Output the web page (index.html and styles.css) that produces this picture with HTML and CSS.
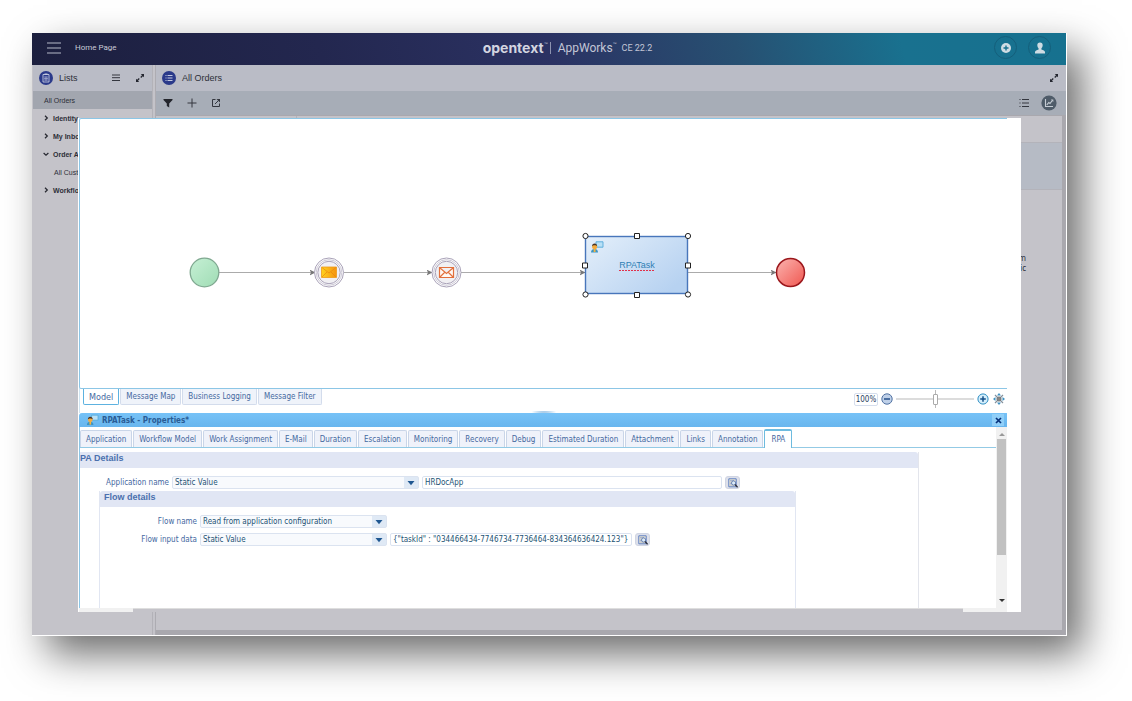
FILE: index.html
```html
<!DOCTYPE html>
<html lang="en">
<head>
<meta charset="utf-8">
<title>AppWorks - All Orders</title>
<link rel="stylesheet" href="styles.css">
</head>
<body>
<svg class="defs" width="0" height="0" aria-hidden="true">
  <symbol id="expand" viewBox="0 0 10 10"><path d="M5.800 1H9v3.200L7.900 3.200 6.200 4.900 5.300 4 7 2.200zM4.200 9H1V5.800l1.100 1L3.800 5.100l.9.9L3 7.800z" fill="#24262f"/></symbol>
  <symbol id="right" viewBox="0 0 6 6"><path d="M2 .8L4.300 3 2 5.200" fill="none" stroke="#26272f" stroke-width="1.200"/></symbol>
  <symbol id="down" viewBox="0 0 6 6"><path d="M.6 2L3 4.200 5.400 2" fill="none" stroke="#26272f" stroke-width="1.200"/></symbol>
  <symbol id="arrow" viewBox="0 0 8 6"><path d="M.5 1h7L4 5.200z" fill="#1f5791"/></symbol>
  <symbol id="user" viewBox="0 0 14 12">
    <path d="M6 .8h7v5.400H6z" fill="#b9e0f6" stroke="#55a9d9" stroke-width=".9"/>
    <path d="M1 11.500c0-2.500 1.500-3.500 3.500-3.500S8 9 8 11.500z" fill="#3c95c4"/>
    <path d="M3.700 7.600h1.800v3.400H3.700z" fill="#f7b23c"/>
    <circle cx="4.600" cy="5.700" r="2.500" fill="#f5ab3f"/>
    <path d="M2 5.400C2 3.400 3.200 2.500 4.600 2.500s2.700 1 2.600 2.900C6.500 4.400 5.800 4.300 4.600 4.300S2.700 4.500 2 5.400z" fill="#4a3222"/>
  </symbol>
  <symbol id="browse" viewBox="0 0 10 10">
    <path d="M.8.8h7.400v8H.8z" fill="#f3ead2" stroke="#5d7fc4"/>
    <path d="M2 2.500h4M2 4h2M2 5.500h2M2 7h4" stroke="#7892cb" stroke-width=".6"/>
    <circle cx="5.600" cy="5" r="2.100" fill="#dcebf8" stroke="#516fa8" stroke-width=".8"/>
    <path d="M7 6.500l2.600 2.800" stroke="#2c3040" stroke-width="1.500"/>
  </symbol>
</svg>

<div class="app">
  <header class="topbar">
    <div class="topbar-side">
      <button class="plain" aria-label="Menu"><svg width="14" height="12" viewBox="0 0 14 12"><path d="M0 1h14M0 6h14M0 11h14" stroke="#b6b9c8" stroke-width="1.200"/></svg></button>
      <a class="home" href="#">Home Page</a>
    </div>
    <div class="brand"><span class="brand-name">opentext</span><span class="tm">™</span><span class="bar"></span><span class="product">AppWorks</span><span class="tm">™</span><span class="version">CE 22.2</span></div>
    <div class="topbar-side topbar-end">
      <button class="round" aria-label="Add"><svg width="12" height="12" viewBox="0 0 12 12"><circle cx="6" cy="6" r="5" fill="#cfdce3"/><path d="M6 3.500v5M3.500 6h5" stroke="#17708f" stroke-width="1.400"/></svg></button>
      <button class="round" aria-label="Account"><svg width="12" height="12" viewBox="0 0 12 12"><path d="M6 .4c1.800 0 2.800 1.200 2.700 2.900C8.600 4.900 8 5.800 7.400 6.400v1c1.800.7 3.600 1 3.600 2.700V11.600H1v-1.500c0-1.700 1.800-2 3.600-2.700v-1C4 5.800 3.400 4.900 3.300 3.300 3.200 1.600 4.200.4 6 .4z" fill="#cfdce3"/></svg></button>
    </div>
  </header>

  <div class="main">
    <aside class="sidebar">
      <div class="panel-head">
        <svg width="14" height="14" viewBox="0 0 14 14"><circle cx="7" cy="7" r="7" fill="#2b3a8a"/><path d="M4 3.500h6v7.500H4z" fill="none" stroke="#c3c8df" stroke-width=".9"/><path d="M5.500 2.500h3v1.500h-3z" fill="#c3c8df"/><path d="M5 6h4M5 7.500h4M5 9h4M7 5.500v4.500" stroke="#c3c8df" stroke-width=".6"/></svg>
        <h2>Lists</h2>
        <button class="plain push" aria-label="List options"><svg width="8" height="8" viewBox="0 0 8 8"><path d="M0 1h8M0 3.700h8M0 6.500h8" stroke="#34363f"/></svg></button>
        <button class="plain expand" aria-label="Expand lists"><svg width="10" height="10"><use href="#expand"/></svg></button>
      </div>
      <nav class="tree">
        <a class="current" href="#">All Orders</a>
        <a href="#"><svg width="6" height="6"><use href="#right"/></svg>Identity</a>
        <a href="#"><svg width="6" height="6"><use href="#right"/></svg>My Inbox</a>
        <a href="#"><svg width="6" height="6"><use href="#down"/></svg>Order App</a>
        <a class="child" href="#">All Customers</a>
        <a href="#"><svg width="6" height="6"><use href="#right"/></svg>Workflow</a>
      </nav>
    </aside>

    <section class="orders">
      <div class="panel-head">
        <svg width="14" height="14" viewBox="0 0 14 14"><circle cx="7" cy="7" r="7" fill="#2b3a8a"/><path d="M5.500 4.500h5M5.500 7h5M5.500 9.500h5M3.500 4.500h1M3.500 7h1M3.500 9.500h1" stroke="#c3c8df"/></svg>
        <h2>All Orders</h2>
        <button class="plain push" aria-label="Expand orders"><svg width="10" height="10"><use href="#expand"/></svg></button>
      </div>
      <div class="toolbar">
        <button class="plain" aria-label="Filter"><svg width="10" height="10" viewBox="0 0 10 10"><path d="M.5 1h9v1L6.200 5.500V9.500L3.800 8V5.500L.5 2z" fill="#23252c"/></svg></button>
        <button class="plain" aria-label="New"><svg width="10" height="10" viewBox="0 0 10 10"><path d="M5 .5v9M.5 5h9" stroke="#34373f"/></svg></button>
        <button class="plain" aria-label="Open"><svg width="10" height="10" viewBox="0 0 10 10"><path d="M4.500 1.500H1.500v7h7v-3" fill="none" stroke="#34373f"/><path d="M4 6l3.500-3.500" stroke="#34373f"/><path d="M5.500 1H9v3.500z" fill="#34373f"/></svg></button>
        <button class="plain push" aria-label="List view"><svg width="10" height="10" viewBox="0 0 10 10"><path d="M3 1.500h7M3 5h7M3 8.500h7M.5 1.500h1M.5 5h1M.5 8.500h1" stroke="#34373f"/></svg></button>
        <button class="plain" aria-label="Chart view"><svg width="16" height="16" viewBox="0 0 16 16"><circle cx="8" cy="8" r="7.600" fill="#4f5c69"/><path d="M4.500 4v7.500h7.500" fill="none" stroke="#c5ccd4" stroke-width="1.100"/><path d="M5.800 9.800L7.800 7.500l1.200 1 2.200-2.800" fill="none" stroke="#c5ccd4" stroke-width="1.100"/><path d="M9.800 4.500H12.300V7z" fill="#c5ccd4"/></svg></button>
      </div>
      <div class="grid-body">
        <div class="grid-head"><span></span><span></span></div>
        <div class="grid-row"></div>
        <div class="grid-note">m<br>ic</div>
      </div>
    </section>
  </div>

  <div class="dialog">
    <div class="canvas">
      <svg class="diagram" width="928" height="268" viewBox="0 0 928 268">
        <defs>
          <linearGradient id="g" x1="0" y1="0" x2="1" y2="1"><stop offset="0" stop-color="#c6f0d5"/><stop offset="1" stop-color="#9fdcb4"/></linearGradient>
          <linearGradient id="r" x1="0" y1="0" x2="1" y2="1"><stop offset="0" stop-color="#fbb4b0"/><stop offset="1" stop-color="#f05750"/></linearGradient>
          <linearGradient id="b" x1="0" y1="0" x2="1" y2=".7"><stop offset="0" stop-color="#e4effa"/><stop offset="1" stop-color="#b7d2f1"/></linearGradient>
          <linearGradient id="o" x1="0" y1="0" x2="1" y2="0"><stop offset="0" stop-color="#ffd21e"/><stop offset="1" stop-color="#f5930f"/></linearGradient>
          <marker id="tip" markerUnits="userSpaceOnUse" markerWidth="6" markerHeight="6" refX="5.500" refY="3" orient="auto"><path d="M0 0l6 3-6 3 1.500-3z" fill="#777"/></marker>
        </defs>
        <g stroke="#ababab" stroke-width="1.200">
          <path d="M139 153.500H235" marker-end="url(#tip)"/><path d="M264 153.500H352" marker-end="url(#tip)"/>
          <path d="M381 153.500H505" marker-end="url(#tip)"/><path d="M608 153.500H696" marker-end="url(#tip)"/>
        </g>
        <circle cx="124.500" cy="153.500" r="14.300" fill="url(#g)" stroke="#7fa890" stroke-width="1.300"/>
        <g fill="#fff" stroke="#a9a2b8"><circle cx="249" cy="153.500" r="14.500"/><circle cx="249" cy="153.500" r="12.800" stroke-width=".6"/><circle cx="249" cy="153.500" r="11.200" fill="#f1f0f3"/>
        <circle cx="366.500" cy="153.500" r="14.500"/><circle cx="366.500" cy="153.500" r="12.800" stroke-width=".6"/><circle cx="366.500" cy="153.500" r="11.200" fill="#f1f0f3"/></g>
        <path d="M241.500 148h15v10.500h-15z" fill="url(#o)" stroke="#ee9a16" stroke-width=".8"/><path d="M242 148.500l7 5.500 7-5.500M242 158l5-5M256 158l-5-5" fill="none" stroke="#e98510" stroke-width=".7"/>
        <path d="M359.500 148.500h14v10h-14zM360 149l6.500 5.500 6.500-5.500M360 158l5-5M373 158l-5-5" fill="#fff8f3" stroke="#e2703c" stroke-width="1.200"/>
        <rect x="505.500" y="117.500" width="102" height="57" fill="url(#b)" stroke="#4876bb" stroke-width="1.400"/>
        <use href="#user" x="510" y="121" width="14" height="14"/>
        <text class="task-name" x="557" y="149" text-anchor="middle">RPATask</text>
        <path d="M539 151.500h36" stroke="#e0304b" stroke-width="1" stroke-dasharray="2 1"/>
        <g fill="#fff" stroke="#222">
          <circle cx="505.500" cy="117" r="2.600"/><circle cx="608" cy="117" r="2.600"/><circle cx="505.500" cy="175.500" r="2.600"/><circle cx="608" cy="175.500" r="2.600"/>
          <path d="M554.500 114.500h5v5h-5zM554.500 173.500h5v5h-5zM502.500 144h5v5h-5zM605.500 144h5v5h-5z"/>
        </g>
        <circle cx="710.500" cy="153.500" r="14" fill="url(#r)" stroke="#9b171c" stroke-width="1.500"/>
      </svg>
    </div>

    <div class="view-bar">
      <div class="view-tabs" role="tablist">
        <button role="tab" class="selected" aria-selected="true">Model</button>
        <button role="tab">Message Map</button>
        <button role="tab">Business Logging</button>
        <button role="tab">Message Filter</button>
      </div>
      <i class="grip"></i>
      <div class="zoom">
        <input class="zoom-value" aria-label="Zoom level" value="100%">
        <button class="plain" aria-label="Zoom out"><svg width="12" height="12" viewBox="0 0 12 12"><circle cx="6" cy="6" r="5.200" fill="#bfd0e8" stroke="#5273a3"/><path d="M3 6h6" stroke="#254f8a" stroke-width="1.500"/></svg></button>
        <input class="slider" type="range" aria-label="Zoom" min="0" max="100" value="50">
        <button class="plain" aria-label="Zoom in"><svg width="12" height="12" viewBox="0 0 12 12"><circle cx="6" cy="6" r="5.100" fill="#d5eefb" stroke="#2f8fc4"/><path d="M3.200 6h5.600M6 3.200v5.600" stroke="#14508a" stroke-width="1.500"/></svg></button>
        <button class="plain fit" aria-label="Fit to window"><svg width="12" height="12" viewBox="0 0 12 12"><path d="M6 0l2 2.500H4zM6 12l2-2.500H4zM0 6l2.500-2v4zM12 6L9.500 4v4z" fill="#3c8fc0"/><path d="M2 2l8 8M10 2l-8 8" stroke="#84909c" stroke-width="1.200"/><circle cx="6" cy="6" r="2.100" fill="#8a8580" stroke="#73787c"/></svg></button>
      </div>
    </div>

    <section class="props">
      <div class="props-title">
        <svg width="13" height="12"><use href="#user"/></svg>
        <h3>RPATask - Properties*</h3>
        <button aria-label="Close"><svg width="7" height="7" viewBox="0 0 7 7"><path d="M1 1l5 5M6 1L1 6" stroke="#06307a" stroke-width="1.700"/></svg></button>
      </div>
      <div class="props-body">
        <div class="pane">
          <div class="tabs" role="tablist">
            <button role="tab">Application</button>
            <button role="tab">Workflow Model</button>
            <button role="tab">Work Assignment</button>
            <button role="tab">E-Mail</button>
            <button role="tab">Duration</button>
            <button role="tab">Escalation</button>
            <button role="tab">Monitoring</button>
            <button role="tab">Recovery</button>
            <button role="tab">Debug</button>
            <button role="tab">Estimated Duration</button>
            <button role="tab">Attachment</button>
            <button role="tab">Links</button>
            <button role="tab">Annotation</button>
            <button role="tab" class="selected" aria-selected="true">RPA</button>
          </div>
          <div class="group outer">
            <h4>PA Details</h4>
            <div class="row">
              <label for="app-type">Application name</label>
              <span class="pick wide"><select id="app-type"><option>Static Value</option></select><svg width="8" height="6"><use href="#arrow"/></svg></span>
              <input class="app-value" aria-label="Application value" value="HRDocApp">
              <button class="browse" aria-label="Browse applications"><svg width="10" height="10"><use href="#browse"/></svg></button>
            </div>
            <div class="group inner">
              <h4>Flow details</h4>
              <div class="row">
                <label for="flow-name">Flow name</label>
                <span class="pick"><select id="flow-name"><option>Read from application configuration</option></select><svg width="8" height="6"><use href="#arrow"/></svg></span>
              </div>
              <div class="row">
                <label for="flow-data">Flow input data</label>
                <span class="pick"><select id="flow-data"><option>Static Value</option></select><svg width="8" height="6"><use href="#arrow"/></svg></span>
                <input class="flow-value" aria-label="Flow input value" value='{"taskId" : "034466434-7746734-7736464-834364636424.123"}'>
                <button class="browse" aria-label="Browse flow data"><svg width="10" height="10"><use href="#browse"/></svg></button>
              </div>
            </div>
          </div>
        </div>
        <div class="vscroll">
          <svg width="6" height="4" viewBox="0 0 6 4"><path d="M0 4l3-3 3 3z" fill="#999"/></svg>
          <i></i>
          <svg width="6" height="4" viewBox="0 0 6 4"><path d="M0 0l3 3 3-3z" fill="#333"/></svg>
        </div>
      </div>
      <div class="hscroll"><i></i></div>
    </section>
  </div>
</div>
</body>
</html>
```
FILE: styles.css
```css
* { box-sizing: border-box; }

body {
  margin: 0;
  min-height: 100vh;
  padding: 33px 65px 65px 32px;
  display: flex;
  background: #fff;
  font-family: "Liberation Sans", Arial, sans-serif;
  font-size: 9px;
  color: #2d2f38;
}

.defs { position: absolute; }
svg { display: block; flex: none; }
h2, h3, h4 { margin: 0; }
a { color: inherit; text-decoration: none; }
button, input, select { font: inherit; color: inherit; margin: 0; }
.plain { padding: 0; border: 0; background: none; }
.push { margin-left: auto; }

.app {
  position: relative;
  flex: 1;
  display: flex;
  flex-direction: column;
  border-right: 1px solid #fff;
  border-bottom: 1px solid #fff;
  background: #c4c3c9;
  box-shadow: 15px 18px 38px rgba(0, 0, 0, 0.58);
}

/* Top bar */
.topbar {
  height: 32px;
  display: flex;
  align-items: center;
  padding: 0 15px 3px 15px;
  background: linear-gradient(75deg, #1c1f3e 0%, #23274f 28%, #2b3263 50%, #275072 68%, #19718f 84%, #16718f 100%);
}
.topbar-side { flex: 1; display: flex; align-items: center; gap: 14px; }
.topbar-end { justify-content: flex-end; gap: 11px; }
.home { font-family: Roboto, sans-serif; font-size: 8px; color: #c9cad6; }
.brand { display: flex; align-items: center; padding-left: 37px; color: #c3c6d6; }
.brand-name { font-family: Inter, sans-serif; font-weight: 700; font-size: 14px; color: #d3d5e0; }
.tm { font-size: 4px; align-self: flex-start; margin-top: 2px; }
.bar { width: 1px; height: 12px; margin: 0 7px 0 2px; background: #8d93b0; }
.product { font-family: Roboto, sans-serif; font-size: 12px; }
.version { margin-left: 5px; font-family: Roboto, sans-serif; font-size: 9px; }
.round {
  width: 23px;
  height: 23px;
  padding: 0;
  display: grid;
  place-items: center;
  border: 1px solid #145f7b;
  border-radius: 50%;
  background: none;
}

/* Panels behind the dialog */
.main { flex: 1; display: flex; gap: 2px; padding-left: 1px; }
.sidebar { width: 120px; border-right: 1px solid #b3b2b8; }
.orders {
  flex: 1;
  display: flex;
  flex-direction: column;
  border-left: 1px solid #adacb2;
}
.panel-head {
  height: 26px;
  display: flex;
  align-items: center;
  gap: 6px;
  padding: 0 7px 0 6px;
  background: #babcc6;
}
.panel-head h2 { font-size: 9px; font-weight: 400; }
.panel-head .expand { margin-left: 9px; }
.tree { display: flex; flex-direction: column; font-size: 7px; font-weight: 700; }
.tree a {
  height: 18px;
  display: flex;
  align-items: center;
  gap: 4px;
  padding-left: 10px;
}
.tree .current { padding-left: 11px; background: #a2a6af; font-weight: 400; }
.tree .child { padding-left: 21px; font-weight: 400; }
.toolbar {
  height: 24px;
  display: flex;
  align-items: center;
  gap: 14px;
  padding: 0 9px 0 7px;
  background: #a7adb7;
}
.toolbar .push + .plain { margin-left: -2px; }
.grid-body {
  flex: 1;
  border: solid #a9a8ae;
  border-width: 1px 4px 5px 0;
}
.grid-head { display: flex; height: 27px; border-bottom: 1px solid #b3b3ba; }
.grid-head span:first-child { width: 141px; border-right: 1px solid #b3b3ba; }
.grid-row { height: 47px; background: #b6bbc5; border-bottom: 1px solid #b3b3ba; }
.grid-note {
  padding: 63px 36px 0 0;
  text-align: right;
  font: 8px/10px "Noto Sans", sans-serif;
}

/* Dialog */
.dialog {
  position: absolute;
  inset: 85px 45px 23px 46px;
  display: flex;
  flex-direction: column;
  padding: 0 14px 0 1px;
  background: #fff;
  font-family: "DejaVu Sans Condensed", "DejaVu Sans", sans-serif;
  font-size: 8px;
  color: #45699f;
}
.canvas {
  flex: 1;
  overflow: hidden;
  border: 1px solid #8cc6e6;
  border-right: 0;
  border-radius: 2px 0 0 2px;
}
.task-name { font: 9px "Liberation Sans", Arial, sans-serif; fill: #2f7fb5; }

.view-bar {
  height: 24px;
  display: flex;
  justify-content: space-between;
  border-left: 1px solid #cfe4f1;
}
.view-tabs { flex: 1; display: flex; align-items: flex-start; gap: 1px; padding-left: 3px; }
.view-tabs button {
  height: 16px;
  padding: 0 5px;
  border: 1px solid #d3dcec;
  border-top: 0;
  border-radius: 0 0 2px 2px;
  background: #eff3fa;
}
.view-tabs .selected { border: 1px solid #5db2e0; border-top: 0; background: #fff; font-size: 9px; }
.grip {
  align-self: flex-end;
  width: 24px;
  height: 2px;
  background: radial-gradient(#6fa9d8, #fff 80%);
}
.zoom { flex: 1; display: flex; align-items: center; justify-content: flex-end; gap: 3px; padding: 0 2px 4px 0; }
.zoom-value {
  width: 24px;
  height: 13px;
  padding: 0;
  border: 1px solid #d6deed;
  border-radius: 2px;
  background: #fff;
  color: #28405f;
  text-align: center;
}
.zoom .fit { margin-left: 1px; }
.slider {
  appearance: none;
  width: 78px;
  height: 18px;
  background:
    linear-gradient(#bbb, #bbb) center / 1px 100% no-repeat,
    linear-gradient(#dcdcdc, #dcdcdc) center / 100% 2px no-repeat;
}
.slider::-webkit-slider-thumb {
  appearance: none;
  width: 5px;
  height: 11px;
  border: 1px solid #aaa;
  border-radius: 1px;
  background: #fff;
}

/* Properties */
.props { height: 199px; display: flex; flex-direction: column; }
.props-title {
  height: 14px;
  display: flex;
  align-items: center;
  gap: 3px;
  padding: 0 3px 0 7px;
  border-radius: 3px 0 0 0;
  background: linear-gradient(#76c2f7, #69b6ee);
}
.props-title h3 { flex: 1; font-size: 8px; color: #2a5c95; }
.props-title button {
  width: 12px;
  height: 12px;
  padding: 0;
  display: grid;
  place-items: center;
  border: 0;
  background: #91cff8;
}
.props-body { flex: 1; min-height: 0; display: flex; border-left: 1px solid #8cc6e6; }
.pane { flex: 1; min-width: 0; overflow: hidden; }
.tabs {
  height: 21px;
  display: flex;
  align-items: flex-end;
  gap: 1px;
  border-bottom: 1px solid #93cae5;
}
.tabs button {
  height: 17px;
  padding: 0 5px;
  white-space: nowrap;
  border: 1px solid #c9d5e8;
  border-bottom: 0;
  border-radius: 2px 2px 0 0;
  background: #eff2fa;
}
.tabs .selected {
  height: 19px;
  margin-bottom: -1px;
  padding: 0 6px;
  border: 1px solid #6dbbdf;
  border-top-width: 2px;
  border-bottom: 0;
  background: #fff;
}
.group h4 {
  height: 16px;
  border-radius: 0 3px 0 0;
  background: #e1e6f4;
  color: #4b70ae;
  font: 700 9px/13px "Liberation Sans", Arial, sans-serif;
}
.outer { margin: 4px 77px 0 0; border-right: 1px solid #e3e5ec; }
.inner {
  height: 200px;
  margin: 2px 122px 0 19px;
  border: solid #e1e6f2;
  border-width: 0 1px;
}
.inner h4 { padding-left: 4px; border-radius: 3px 3px 0 0; }
.row { display: flex; align-items: center; gap: 3px; margin-top: 8px; height: 13px; }
.row + .row { margin-top: 5px; }
.row label { width: 89px; text-align: right; flex: none; }
.inner .row label { width: 97px; }
.pick { display: grid; align-items: center; flex: 0 1 187px; }
.pick.wide { flex-basis: 247px; }
.pick > * { grid-area: 1 / 1; }
.pick svg { justify-self: end; margin-right: 4px; pointer-events: none; }
.pick select, .row input {
  width: 100%;
  height: 13px;
  padding: 0 2px;
  border: 1px solid #dbe3f0;
  border-radius: 2px;
  background: #fff;
  color: #1c5374;
}
.pick select { appearance: none; background: linear-gradient(90deg, #f8fafd calc(100% - 14px), #dfe9f5 0); }
.row .app-value { flex: 0 1 300px; width: auto; }
.row .flow-value { flex: 0 1 242px; width: auto; }
.browse {
  width: 15px;
  height: 13px;
  padding: 0;
  display: grid;
  place-items: center;
  border: 1px solid #d0d5e3;
  border-radius: 3px;
  background: #dde0ea;
}
.vscroll {
  width: 11px;
  display: flex;
  flex-direction: column;
  align-items: center;
  padding: 5px 0;
  background: #f1f1f1;
}
.vscroll i { width: 9px; height: 116px; margin: 3px 0 auto; background: #c1c1c1; }
.hscroll { height: 4px; flex: none; padding: 0 44px 0 54px; background: #f1f1f1; }
.hscroll i { display: block; height: 4px; background: #c4c3c9; border-top: 1px solid #dedede; }
```
